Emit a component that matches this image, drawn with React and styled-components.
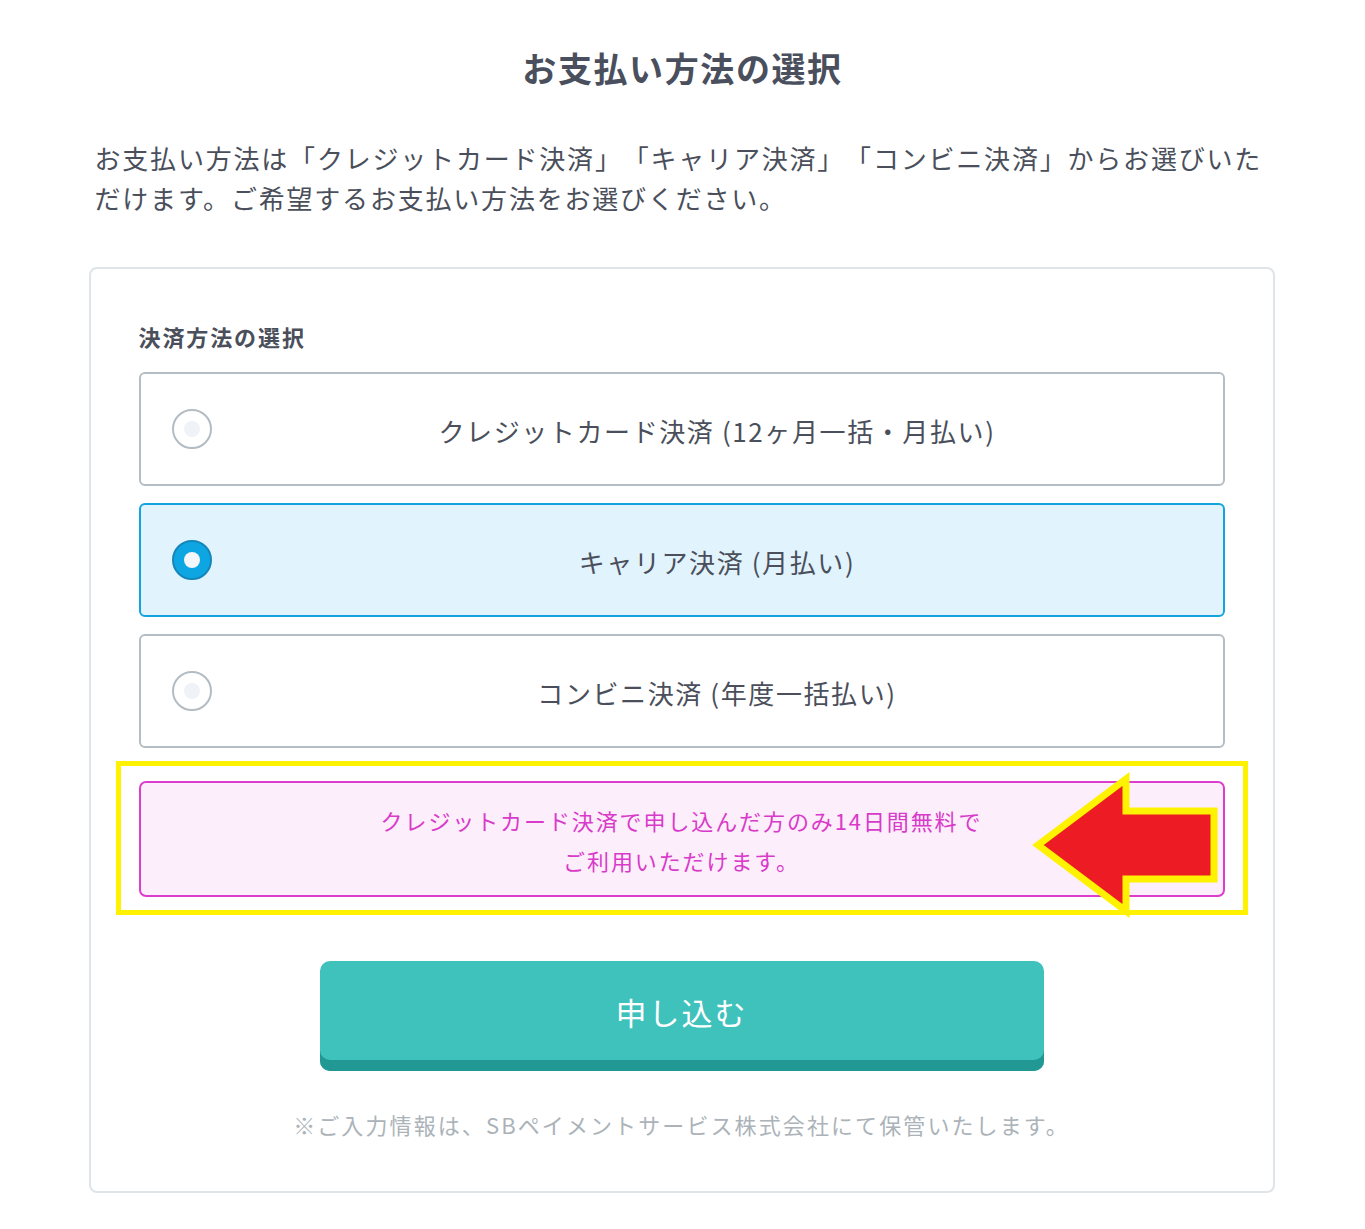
import React, { useState } from "react";
import styled, { createGlobalStyle } from "styled-components";

const Global = createGlobalStyle`
  html, body { margin: 0; padding: 0; background: #fff; }
  body {
    font-family: "Noto Sans CJK JP", "Noto Sans", sans-serif;
    color: #4a4f5b;
    text-spacing-trim: space-all;
  }
  * { box-sizing: border-box; }
`;

const Page = styled.div`
  width: 1365px;
  padding: 44px 0 36px;
  display: flex;
  flex-direction: column;
  align-items: center;
`;

const Title = styled.h1`
  margin: 0;
  font-size: 34px;
  line-height: 48px;
  font-weight: 700;
  letter-spacing: 1.6px;
  color: #4a4f5d;
`;

const Content = styled.div`
  width: 1186px;
  margin-right: 2px;
  display: flex;
  flex-direction: column;
`;

const Lead = styled.p`
  margin: 46px 0 0;
  padding: 0 2px 0 6px;
  font-size: 26px;
  line-height: 40px;
  letter-spacing: 1.8px;
  color: #4a4f5b;
`;

const Card = styled.section`
  margin-top: 49px;
  border: 2px solid #dfe4e8;
  border-radius: 8px;
  padding: 51px 48px 50px;
  display: flex;
  flex-direction: column;
`;

const Label = styled.h2`
  margin: 0;
  font-size: 22px;
  line-height: 33px;
  font-weight: 700;
  letter-spacing: 1.9px;
  color: #4a4f5b;
`;

const Options = styled.div`
  margin-top: 19px;
  display: flex;
  flex-direction: column;
  gap: 17px;
`;

const Option = styled.label`
  height: 114px;
  display: flex;
  align-items: center;
  border: 2px solid ${(p) => (p.$active ? "#13a3df" : "#b5bdc3")};
  background: ${(p) => (p.$active ? "#e1f3fd" : "#fff")};
  border-radius: 6px;
  padding-left: 31px;
  cursor: pointer;
`;

const Radio = styled.span`
  flex: none;
  width: 40px;
  height: 40px;
  border-radius: 50%;
  border: 2px solid ${(p) => (p.$active ? "#1586bb" : "#b3bcc2")};
  background: ${(p) => (p.$active ? "#0ea6e2" : "#fff")};
  display: flex;
  align-items: center;
  justify-content: center;
  &::after {
    content: "";
    width: 16px;
    height: 16px;
    border-radius: 50%;
    background: ${(p) => (p.$active ? "#f3f6fa" : "#eff2f7")};
  }
`;

const OptionText = styled.span`
  flex: 1;
  text-align: center;
  font-size: 26px;
  line-height: 36px;
  letter-spacing: 1.6px;
  color: #4a4f5b;
  margin-top: 4px;
`;

const Highlight = styled.div`
  position: relative;
  margin: 13px -23px 0;
  border: 5px solid #fff200;
  padding: 15px 18px 13px;
`;

const Notice = styled.div`
  border: 2px solid #dd3dcd;
  background: #fdeefb;
  border-radius: 7px;
  height: 116px;
  display: flex;
  flex-direction: column;
  align-items: center;
  justify-content: center;
  font-size: 22px;
  line-height: 40px;
  letter-spacing: 1.9px;
  color: #d83bc9;
  padding-top: 2px;
`;

const Arrow = styled.svg`
  position: absolute;
  left: 908px;
  top: 2px;
  width: 200px;
  height: 148px;
  overflow: visible;
`;

const Submit = styled.button`
  align-self: center;
  margin-top: 46px;
  width: 724px;
  height: 110px;
  border: none;
  border-radius: 10px;
  background: #3fc1bc;
  box-shadow: inset 0 -11px 0 #219893;
  color: #fff;
  font-family: inherit;
  font-size: 31px;
  letter-spacing: 2px;
  padding: 0 0 10px;
  cursor: pointer;
`;

const Note = styled.p`
  margin: 37px 0 0;
  text-align: center;
  font-size: 22px;
  line-height: 33px;
  letter-spacing: 2.1px;
  color: #abb3b9;
`;

const options = [
  "クレジットカード決済 (12ヶ月一括・月払い)",
  "キャリア決済 (月払い)",
  "コンビニ決済 (年度一括払い)",
];

export default function App() {
  const [sel, setSel] = useState(1);
  return (
    <>
      <Global />
      <Page>
        <Title>お支払い方法の選択</Title>
        <Content>
          <Lead>
            お支払い方法は「クレジットカード決済」「キャリア決済」「コンビニ決済」からお選びいただけます。ご希望するお支払い方法をお選びください。
          </Lead>
          <Card>
            <Label>決済方法の選択</Label>
            <Options>
              {options.map((t, i) => (
                <Option key={t} $active={sel === i} onClick={() => setSel(i)}>
                  <Radio $active={sel === i} />
                  <OptionText>{t}</OptionText>
                </Option>
              ))}
            </Options>
            <Highlight>
              <Notice>
                <div>クレジットカード決済で申し込んだ方のみ14日間無料で</div>
                <div>ご利用いただけます。</div>
              </Notice>
              <Arrow viewBox="0 0 200 148">
                <polygon
                  points="9,77 97,11 97,43 185,43 185,111 97,111 97,143"
                  fill="#ed1c24"
                  stroke="#fff200"
                  strokeWidth="7"
                  strokeLinejoin="miter"
                />
              </Arrow>
            </Highlight>
            <Submit>申し込む</Submit>
            <Note>※ご入力情報は、SBペイメントサービス株式会社にて保管いたします。</Note>
          </Card>
        </Content>
      </Page>
    </>
  );
}
